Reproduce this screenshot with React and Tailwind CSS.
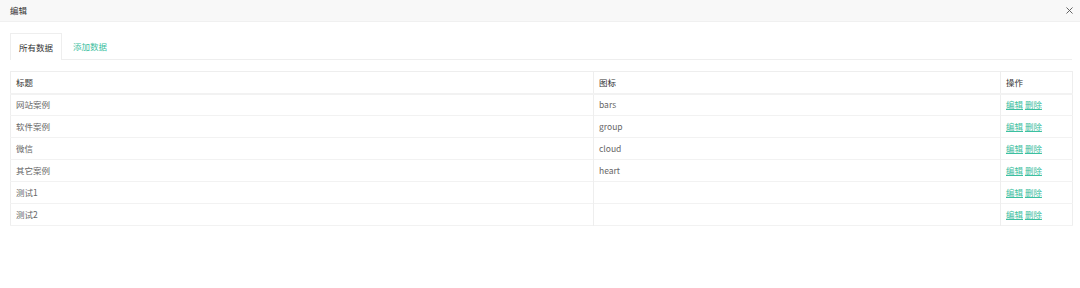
import { X } from 'lucide-react';

const rows = [
  { title: '网站案例', icon: 'bars' },
  { title: '软件案例', icon: 'group' },
  { title: '微信', icon: 'cloud' },
  { title: '其它案例', icon: 'heart' },
  { title: '测试1', icon: '' },
  { title: '测试2', icon: '' },
];

export default function App() {
  return (
    <div className="w-[1080px] h-[288px] bg-white text-[8.5px] text-[#666] font-['Noto_Sans_CJK_SC','Noto_Sans',sans-serif]">
      {/* Title bar */}
      <div className="h-[22px] flex items-center justify-between pl-[10px] pr-[5px] bg-[#f8f8f8] border-b border-[#f0f0f0] text-[#333]">
        <span>编辑</span>
        <X className="w-[11px] h-[11px] text-[#555]" strokeWidth={2} />
      </div>

      <div className="px-[10px] pt-[11px] pr-[8px]">
        {/* Tabs */}
        <div className="flex h-[27px] border-b border-[#eee]">
          <div className="w-[52px] flex items-center justify-center border border-b-0 border-[#eee] bg-white -mb-px text-[#333]">
            所有数据
          </div>
          <div className="w-[56px] flex items-center justify-center text-[#3cc0a0]">添加数据</div>
        </div>

        {/* Table */}
        <table className="mt-[11px] w-[1062px] table-fixed border-collapse border border-[#eee]">
          <colgroup>
            <col className="w-[583px]" />
            <col className="w-[407px]" />
            <col className="w-[72px]" />
          </colgroup>
          <thead>
            <tr className="h-[22px] border-b-2 border-[#f2f2f2] text-[#333]">
              <th className="text-left font-normal px-[5px]">标题</th>
              <th className="text-left font-normal px-[5px] border-l border-[#eee]">图标</th>
              <th className="text-left font-normal px-[5px] border-l border-[#eee]">操作</th>
            </tr>
          </thead>
          <tbody>
            {rows.map((r) => (
              <tr key={r.title} className="h-[22px] border-b border-[#f2f2f2]">
                <td className="px-[5px]">{r.title}</td>
                <td className="px-[5px] border-l border-[#eee]">{r.icon}</td>
                <td className="px-[5px] border-l border-[#eee]">
                  <span className="text-[#3cc0a0] underline">编辑</span>{' '}
                  <span className="text-[#3cc0a0] underline">删除</span>
                </td>
              </tr>
            ))}
          </tbody>
        </table>
      </div>
    </div>
  );
}
